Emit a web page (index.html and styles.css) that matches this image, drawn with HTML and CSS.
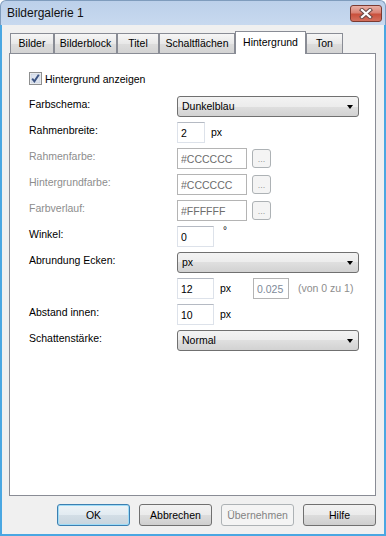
FILE: index.html
```html
<!DOCTYPE html>
<html lang="de">
<head>
  <meta charset="UTF-8">
  <meta name="viewport" content="width=device-width, initial-scale=1.0">
  <title>Bildergalerie 1</title>
  <link rel="stylesheet" href="styles.css">
</head>
<body>
  <div class="window">

    <!-- Titelleiste -->
    <div class="titlebar">
      <span class="title">Bildergalerie 1</span>
      <button class="close" title="Schließen">
        <svg width="14" height="11" viewBox="0 0 14 11">
          <path d="M3 2 L11 9 M11 2 L3 9" stroke="#6b4a46" stroke-width="4.2" stroke-linecap="square"/>
          <path d="M3 2 L11 9 M11 2 L3 9" stroke="#ffffff" stroke-width="2.2" stroke-linecap="square"/>
        </svg>
      </button>
    </div>

    <div class="client">
      <!-- Reiter -->
      <div class="tabs">
        <div class="tab tab-bilder">Bilder</div>
        <div class="tab tab-block">Bilderblock</div>
        <div class="tab tab-titel">Titel</div>
        <div class="tab tab-knoepfe">Schaltflächen</div>
        <div class="tab tab-hintergrund active">Hintergrund</div>
        <div class="tab tab-ton">Ton</div>
      </div>

      <!-- Inhalt Hintergrund -->
      <div class="panel">
        <label class="check-row">
          <span class="checkbox">
            <svg width="13" height="13" viewBox="0 0 13 13">
              <rect x="0.5" y="0.5" width="12" height="12" fill="#f4f4f4" stroke="#8e8f8f"/>
              <rect x="2" y="2" width="9" height="9" fill="#dde3ee" stroke="#b9c4d6" stroke-width="0.5"/>
              <path d="M3.2 6.6 L5.4 9.4 L9.8 2.8" fill="none" stroke="#3b5382" stroke-width="1.9"/>
            </svg>
          </span>
          Hintergrund anzeigen
        </label>

        <div class="form">
          <span class="label">Farbschema:</span>
          <div class="cell"><div class="combo">Dunkelblau<span class="arrow"></span></div></div>

          <span class="label">Rahmenbreite:</span>
          <div class="cell"><input class="field narrow" value="2"><span class="unit">px</span></div>

          <span class="label disabled">Rahmenfarbe:</span>
          <div class="cell"><input class="field color" value="#CCCCCC" disabled><button class="dots" disabled>...</button></div>

          <span class="label disabled">Hintergrundfarbe:</span>
          <div class="cell"><input class="field color" value="#CCCCCC" disabled><button class="dots" disabled>...</button></div>

          <span class="label disabled">Farbverlauf:</span>
          <div class="cell"><input class="field color" value="#FFFFFF" disabled><button class="dots" disabled>...</button></div>

          <span class="label">Winkel:</span>
          <div class="cell"><input class="field" value="0"><span class="degree">°</span></div>

          <span class="label">Abrundung Ecken:</span>
          <div class="cell"><div class="combo">px<span class="arrow"></span></div></div>

          <span class="label"></span>
          <div class="cell">
            <input class="field" value="12"><span class="unit wide">px</span>
            <input class="field small" value="0.025" disabled><span class="hint">(von 0 zu 1)</span>
          </div>

          <span class="label">Abstand innen:</span>
          <div class="cell"><input class="field" value="10"><span class="unit">px</span></div>

          <span class="label">Schattenstärke:</span>
          <div class="cell"><div class="combo">Normal<span class="arrow"></span></div></div>
        </div>
      </div>

      <!-- Knöpfe unten -->
      <div class="buttons">
        <button class="btn default">OK</button>
        <button class="btn">Abbrechen</button>
        <button class="btn" disabled>Übernehmen</button>
        <button class="btn">Hilfe</button>
      </div>
    </div>
  </div>
</body>
</html>
```

FILE: styles.css
```css
/* Grundlayout */
body {
  margin: 0;
  background: #ffffff;
  font-family: "Liberation Sans", Arial, sans-serif;
  font-size: 10.5px;
  color: #000;
}

.window {
  width: 386px;
  height: 536px;
  display: flex;
  flex-direction: column;
}

/* Titelleiste */
.titlebar {
  height: 25px;
  box-sizing: border-box;
  display: flex;
  justify-content: space-between;
  background: linear-gradient(#bcd0ea, #c8d9ef);
  border: 1px solid #7f9cbd;
  border-bottom: 0;
  border-radius: 6px 6px 0 0;
}

.title {
  font-size: 12px;
  color: #111;
  padding-left: 6px;
  line-height: 24px;
}

.close {
  width: 32px;
  height: 17px;
  margin: 4px 3px 0 0;
  padding: 0;
  display: flex;
  align-items: center;
  justify-content: center;
  border: 1px solid #7b3a31;
  border-radius: 3px;
  background: linear-gradient(#e9b0a6, #d98375 45%, #c9503c 55%, #d4705e);
}

/* Fensterinhalt */
.client {
  flex: 1;
  display: flex;
  flex-direction: column;
  background: #f0f0f0;
  border: 2px solid #4aa7e2;
  border-top: 0;
  padding: 6px 8px 8px 7px;
}

/* Reiter */
.tabs {
  display: flex;
  align-items: flex-end;
  height: 22px;
  padding-left: 1px;
}

.tab {
  height: 20px;
  box-sizing: border-box;
  text-align: center;
  line-height: 19px;
  border: 1px solid #898c95;
  border-bottom: 0;
  background: linear-gradient(#f6f6f6, #e8e8e8 50%, #dcdcdc 55%, #d3d3d3);
  white-space: nowrap;
}

.tab-bilder { width: 44px; }
.tab-block { width: 63px; }
.tab-titel { width: 42px; }
.tab-knoepfe { width: 76px; }
.tab-hintergrund { width: 71px; }
.tab-ton { width: 37px; }

.tab.active {
  height: 23px;
  margin-bottom: -1px;
  line-height: 20px;
  background: #ffffff;
  position: relative;
  z-index: 1;
}

.panel {
  height: 443px;
  box-sizing: border-box;
  border: 1px solid #898c95;
  background: #ffffff;
  padding: 18px 0 0 19px;
}

/* Checkbox */
.check-row {
  display: flex;
  align-items: center;
  gap: 3px;
  height: 13px;
  margin-bottom: 11px;
}

.checkbox {
  width: 13px;
  height: 13px;
  display: block;
}

.checkbox svg {
  display: block;
}

/* Formular */
.form {
  display: grid;
  grid-template-columns: 148px auto;
  grid-auto-rows: 21px;
  row-gap: 5px;
}

.label {
  line-height: 13px;
  padding-top: 2px;
}

.label.disabled {
  color: #8d8d8d;
}

.cell {
  display: flex;
  align-items: center;
  gap: 6px;
}

.combo {
  width: 182px;
  height: 21px;
  box-sizing: border-box;
  position: relative;
  border: 1px solid #707070;
  border-radius: 3px;
  padding-left: 4px;
  line-height: 19px;
  background: linear-gradient(#f3f3f3, #ececec 50%, #dfdfdf 50%, #d2d2d2);
}

.arrow {
  position: absolute;
  right: 5px;
  top: 8px;
  border-left: 3.5px solid transparent;
  border-right: 3.5px solid transparent;
  border-top: 4px solid #000;
}

.field {
  width: 37px;
  height: 21px;
  box-sizing: border-box;
  margin: 0;
  padding: 0 0 0 3px;
  font: inherit;
  color: #000;
  background: #ffffff;
  border: 1px solid #dde2ea;
  border-top-color: #b5bac3;
  outline: none;
}

.field.narrow {
  width: 28px;
}

.field.color {
  width: 70px;
}

.field.small {
  width: 36px;
  margin-left: 6px;
}

.field:disabled {
  color: #6d6d6d;
  border-color: #b4b4b4;
  background: #ffffff;
}

.field.small:disabled {
  color: #7e8a99;
}

.unit {
  padding-bottom: 2px;
}

.unit.wide {
  width: 21px;
}

.degree {
  align-self: flex-start;
  margin-left: 3px;
  font-size: 10px;
  line-height: 10px;
}

.hint {
  margin-left: 3px;
  color: #8d8d8d;
  padding-bottom: 2px;
}

.dots {
  width: 19px;
  height: 19px;
  margin-left: -1px;
  padding: 0 0 3px;
  font: 9px "Liberation Sans", Arial, sans-serif;
  color: #9a9a9a;
  display: flex;
  align-items: flex-end;
  justify-content: center;
  border: 1px solid #adb2b5;
  border-radius: 3px;
  background: #f4f4f4;
}

/* Knöpfe unten */
.buttons {
  display: flex;
  justify-content: flex-end;
  gap: 9px;
  margin-top: 8px;
}

.btn {
  width: 73px;
  height: 22px;
  margin: 0;
  padding: 0;
  font: inherit;
  color: #000;
  border: 1px solid #707070;
  border-radius: 3px;
  background: linear-gradient(#f2f2f2, #ebebeb 50%, #dddddd 50%, #cfcfcf);
}

.btn.default {
  border-color: #3c7fb1;
  box-shadow: inset 0 0 0 1px #9fdcf7;
  background: linear-gradient(#edf3f7, #e2ebf1 50%, #d3dee6 50%, #c8d5de);
}

.btn:disabled {
  color: #838383;
  border-color: #adb2b5;
  background: #f4f4f4;
}
```
